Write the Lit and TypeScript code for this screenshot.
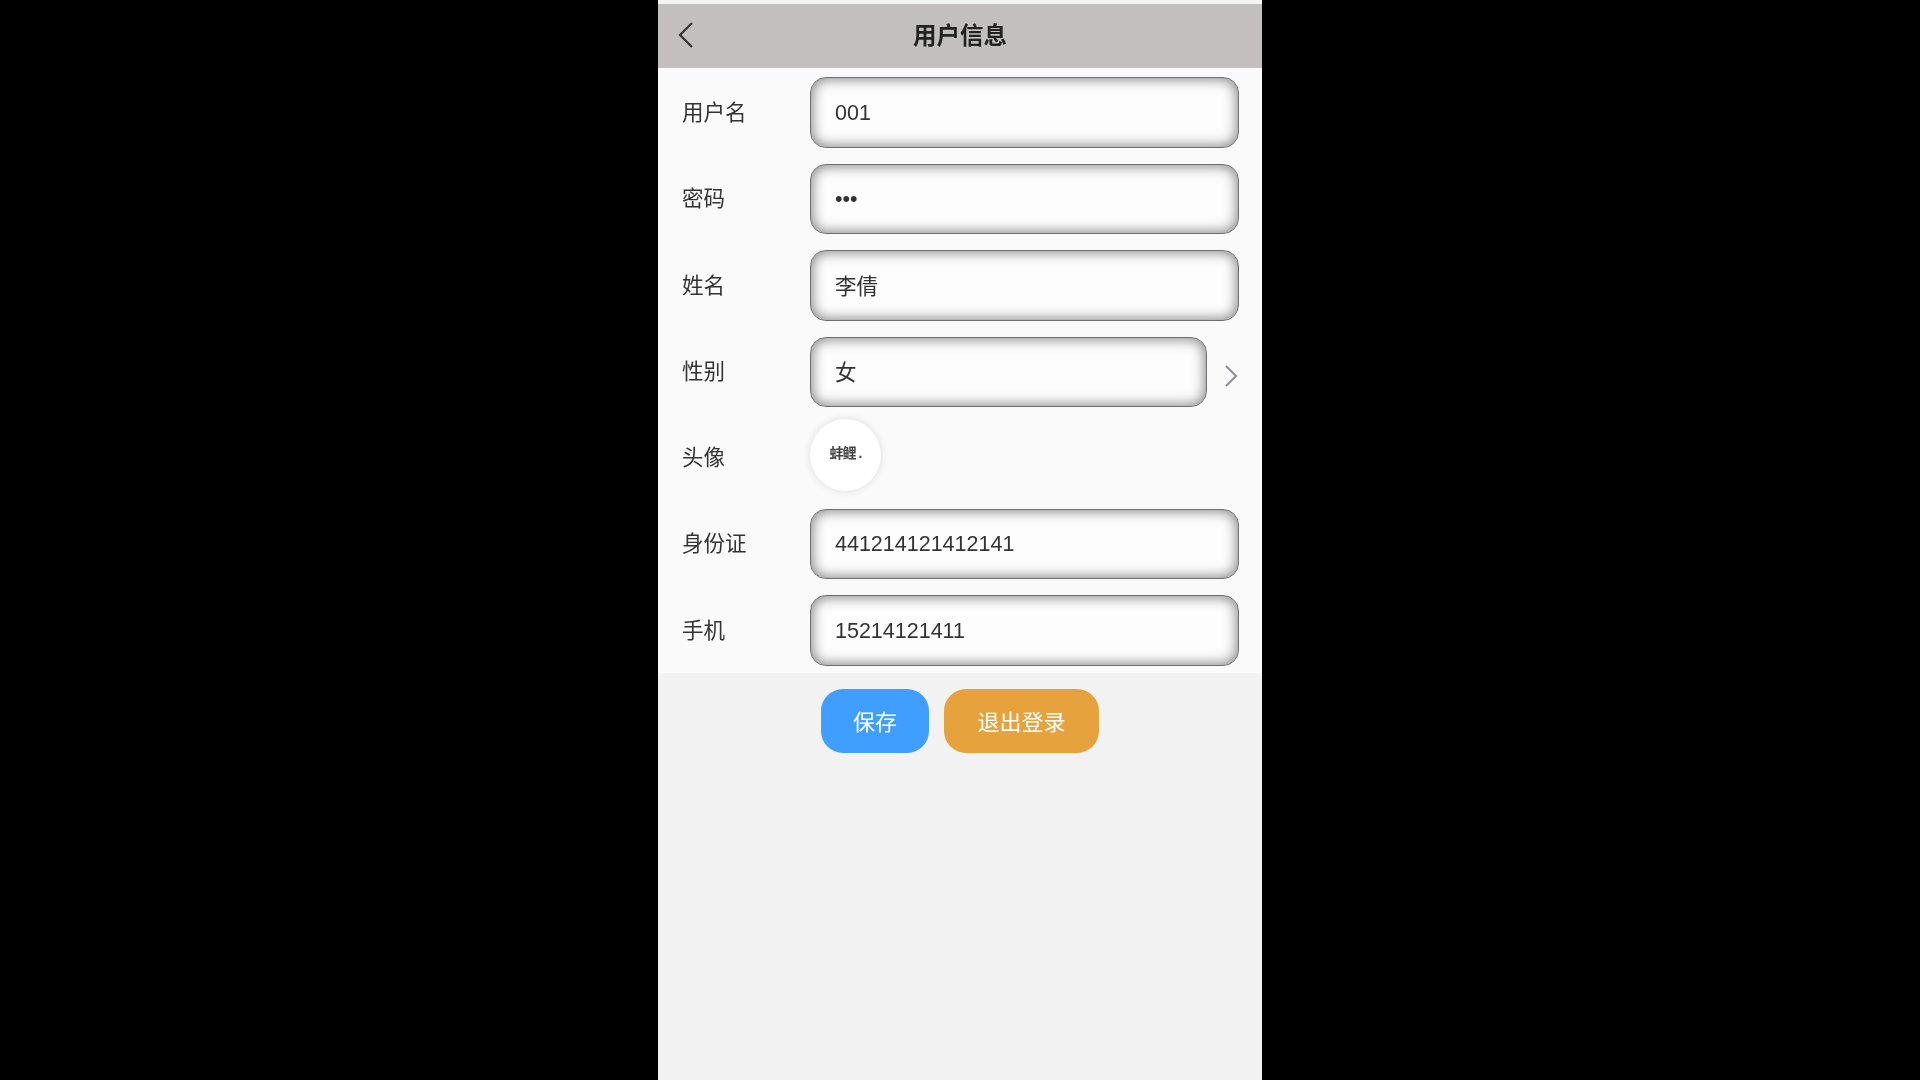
import { LitElement, html, css } from 'lit';
import { customElement } from 'lit/decorators.js';

const FONT = css`"Liberation Sans", "Noto Sans CJK SC", sans-serif`;

@customElement('app-root')
export class AppRoot extends LitElement {
  static styles = css`
    :host {
      display: block;
      background: #000;
      height: 1080px;
      overflow: hidden;
      font-family: ${FONT};
    }
    .phone {
      width: 604px;
      height: 1080px;
      margin: 0 auto;
      background: #f2f2f2;
      filter: blur(0.5px);
    }
    .strip {
      height: 4px;
      background: #f5f4f4;
    }
    .header {
      height: 64px;
      box-sizing: border-box;
      padding-bottom: 4px;
      background: #c3bfbf;
      display: flex;
      align-items: center;
      justify-content: center;
      position: relative;
      font-size: 23.5px;
      font-weight: 700;
      color: #222;
    }
    .back {
      position: absolute;
      left: 19px;
      top: 17px;
    }
    .form {
      height: 605px;
      box-sizing: border-box;
      padding: 9px 23px 0 24px;
      background: #fafafa;
    }
    .row {
      display: flex;
      align-items: center;
      height: 70.5px;
      margin-bottom: 16px;
    }
    .row.avatar-row {
      height: 72px;
      margin: -4.5px 0 18px;
    }
    label {
      width: 128px;
      flex: none;
      box-sizing: border-box;
      padding-bottom: 4px;
      font-size: 21.5px;
      color: #333;
    }
    .avatar-row label {
      padding: 2px 0 0;
    }
    input {
      flex: 1;
      min-width: 0;
      height: 70.5px;
      box-sizing: border-box;
      padding: 2px 24px 0;
      border: 1.5px solid #6f6f6f;
      border-radius: 16px;
      background: #fdfdfd;
      box-shadow: inset 0 0 13px 1px rgba(0, 0, 0, 0.5);
      font: 21.5px ${FONT};
      color: #333;
      outline: none;
    }
    input.cjk {
      padding: 0 24px 2px;
    }
    .chev {
      flex: none;
      width: 32px;
      display: flex;
      justify-content: flex-end;
      padding-top: 8px;
    }
    .avatar {
      width: 71px;
      height: 72px;
      border-radius: 50%;
      background: #fff;
      box-shadow: 0 0 8px rgba(0, 0, 0, 0.12);
      display: flex;
      align-items: center;
      justify-content: center;
      padding-bottom: 6px;
      box-sizing: border-box;
      font-size: 14px;
      font-weight: 700;
      color: #444;
      letter-spacing: -1px;
    }
    .actions {
      display: flex;
      justify-content: center;
      gap: 15px;
      padding-top: 16px;
    }
    button {
      height: 64px;
      border: none;
      border-radius: 22px;
      box-sizing: border-box;
      padding: 0 0 2px;
      font: 22px ${FONT};
      color: #fff;
    }
    .save {
      width: 108px;
      background: #409eff;
    }
    .logout {
      width: 155px;
      background: #e6a23c;
    }
  `;

  private field(name: string, value: string, type = 'text', cjk = false) {
    return html`
      <div class="row">
        <label>${name}</label>
        <input class=${cjk ? 'cjk' : ''} type=${type} .value=${value} />
      </div>
    `;
  }

  render() {
    return html`
      <div class="phone">
        <div class="strip"></div>
        <div class="header">
          <svg class="back" width="18" height="28" viewBox="0 0 18 28" fill="none" stroke="#333" stroke-width="2.2">
            <path d="M15 2 L3 14 L15 26" />
          </svg>
          用户信息
        </div>
        <div class="form">
          ${this.field('用户名', '001')}
          ${this.field('密码', '123', 'password')}
          ${this.field('姓名', '李倩', 'text', true)}
          <div class="row">
            <label>性别</label>
            <input class="cjk" .value=${'女'} />
            <div class="chev">
              <svg width="16" height="24" viewBox="0 0 16 24" fill="none" stroke="#8d9599" stroke-width="2.2">
                <path d="M3 2 L13 12 L3 22" />
              </svg>
            </div>
          </div>
          <div class="row avatar-row">
            <label>头像</label>
            <div class="avatar">蚌鲤 .</div>
          </div>
          ${this.field('身份证', '441214121412141')}
          ${this.field('手机', '15214121411')}
        </div>
        <div class="actions">
          <button class="save">保存</button>
          <button class="logout">退出登录</button>
        </div>
      </div>
    `;
  }
}
